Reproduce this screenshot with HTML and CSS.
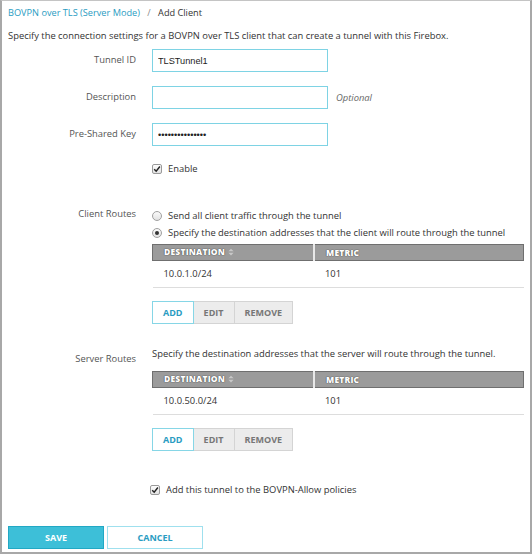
FILE: index.html
```html
<!DOCTYPE html>
<html>
<head>
    <meta charset="UTF-8">
    <title>Add Client</title>
    <link rel="stylesheet" href="styles.css">
</head>
<body>
<div class="page">

<div class="crumbs">
    <a href="#">BOVPN over TLS (Server Mode)</a>
    <span class="sep">/</span>
    <span>Add Client</span>
</div>

<p class="intro">Specify the connection settings for a BOVPN over TLS client that can create a tunnel with this Firebox.</p>

<div class="form">
    <div class="row field">
        <label class="label">Tunnel ID</label>
        <div class="control"><input class="text" type="text" value="TLSTunnel1"></div>
    </div>
    <div class="row field">
        <label class="label">Description</label>
        <div class="control"><input class="text" type="text" value=""><span class="hint">Optional</span></div>
    </div>
    <div class="row field">
        <label class="label">Pre-Shared Key</label>
        <div class="control"><input class="text" type="password" value="secretkey123456"></div>
    </div>
    <div class="row enable">
        <span class="label"></span>
        <div class="control">
            <span class="check"><svg viewBox="0 0 10 10" width="8" height="8"><path d="M1.5 5.2 L4 7.8 L8.6 1.8" fill="none" stroke="#222" stroke-width="1.8"/></svg></span>
            <span>Enable</span>
        </div>
    </div>

    <div class="row routes">
        <span class="label">Client Routes</span>
        <div class="control stack">
            <div class="radio-line"><span class="radio"></span>Send all client traffic through the tunnel</div>
            <div class="radio-line"><span class="radio on"></span>Specify the destination addresses that the client will route through the tunnel</div>
            <table class="grid">
                <tr>
                    <th class="col1">DESTINATION <span class="sort"><svg viewBox="0 0 8 10" width="6" height="8"><path d="M4 0.5 L7.5 4 L0.5 4 Z M4 9.5 L7.5 6 L0.5 6 Z" fill="#c8c8c8"/></svg></span></th>
                    <th>METRIC</th>
                </tr>
                <tr>
                    <td>10.0.1.0/24</td>
                    <td>101</td>
                </tr>
            </table>
            <div class="btns">
                <button class="add">ADD</button><button>EDIT</button><button>REMOVE</button>
            </div>
        </div>
    </div>

    <div class="row routes server">
        <span class="label">Server Routes</span>
        <div class="control stack">
            <div class="note">Specify the destination addresses that the server will route through the tunnel.</div>
            <table class="grid">
                <tr>
                    <th class="col1">DESTINATION <span class="sort"><svg viewBox="0 0 8 10" width="6" height="8"><path d="M4 0.5 L7.5 4 L0.5 4 Z M4 9.5 L7.5 6 L0.5 6 Z" fill="#c8c8c8"/></svg></span></th>
                    <th>METRIC</th>
                </tr>
                <tr>
                    <td>10.0.50.0/24</td>
                    <td>101</td>
                </tr>
            </table>
            <div class="btns">
                <button class="add">ADD</button><button>EDIT</button><button>REMOVE</button>
            </div>
        </div>
    </div>

    <div class="row policy">
        <span class="label"></span>
        <div class="control">
            <span class="check"><svg viewBox="0 0 10 10" width="8" height="8"><path d="M1.5 5.2 L4 7.8 L8.6 1.8" fill="none" stroke="#222" stroke-width="1.8"/></svg></span>
            <span>Add this tunnel to the BOVPN-Allow policies</span>
        </div>
    </div>
</div>

<div class="actions">
    <button class="save">SAVE</button>
    <button class="cancel">CANCEL</button>
</div>

</div>
</body>
</html>
```

FILE: styles.css
```css
html, body {
    margin: 0;
    padding: 0;
    background: #fff;
}
.page {
    box-sizing: border-box;
    width: 532px;
    height: 554px;
    border: 2px solid #a8a8a8;
    border-top: 1px solid #c4c4c4;
    padding: 5px 6px 0 6px;
    font-family: "Open Sans", sans-serif;
    font-size: 9.4px;
    line-height: 14px;
    color: #333;
}
.crumbs {
    font-size: 9.2px;
    line-height: 14px;
    color: #333;
}
.crumbs a {
    color: #2a9cc2;
    text-decoration: none;
}
.crumbs .sep {
    color: #888;
    margin: 0 5px;
}
.intro {
    margin: 9px 0 6px 0;
}
.row {
    display: flex;
}
.label {
    width: 128px;
    flex: none;
    text-align: right;
    color: #555;
    margin-right: 16px;
}
.control {
    display: flex;
    align-items: center;
}
.field {
    margin-bottom: 14px;
}
.field .label {
    line-height: 21px;
}
.text {
    box-sizing: border-box;
    width: 176px;
    height: 23px;
    border: 1px solid #7ed3e4;
    padding: 0 5px;
    font-family: "Liberation Sans", Arial, sans-serif;
    font-size: 9.2px;
    color: #222;
    outline: none;
}
.hint {
    font-style: italic;
    color: #666;
    margin-left: 8px;
}
.check {
    display: inline-flex;
    align-items: center;
    justify-content: center;
    box-sizing: border-box;
    width: 10px;
    height: 10px;
    border: 1px solid #9a9a9a;
    border-radius: 2px;
    background: linear-gradient(#fdfdfd, #e3e3e3);
    margin-right: 6px;
}
.enable {
    margin-top: 16px;
}
.routes {
    margin-top: 31px;
}
.stack {
    flex-direction: column;
    align-items: flex-start;
}
.radio-line {
    display: flex;
    align-items: center;
    height: 17px;
}
.radio {
    box-sizing: border-box;
    width: 10px;
    height: 10px;
    border: 1px solid #a0a0a0;
    border-radius: 50%;
    background: linear-gradient(#fafafa, #e2e2e2);
    margin-right: 6px;
    display: inline-flex;
    align-items: center;
    justify-content: center;
}
.radio.on::after {
    content: "";
    width: 4px;
    height: 4px;
    border-radius: 50%;
    background: #333;
}
.grid {
    width: 372px;
    border-collapse: collapse;
    margin-top: 3px;
}
.grid th {
    background: #9b9b9b;
    color: #fff;
    font-weight: 800;
    font-size: 8.5px;
    text-align: left;
    height: 15px;
    padding: 0 0 0 11px;
    border: 1px solid #6f6f6f;
    text-shadow: 0 0 1px #444, 0 0 1px #444;
    letter-spacing: 0.2px;
}
.grid th.col1 {
    width: 149px;
    border-right: 2px solid #e8e8e8;
}
.sort {
    vertical-align: -1px;
}
.sort svg {
    display: inline-block;
}
.grid td {
    height: 26px;
    padding: 0 0 0 11px;
    border-bottom: 1px solid #ddd;
    color: #333;
}
.btns {
    display: flex;
    margin-top: 13px;
}
.btns button {
    box-sizing: border-box;
    height: 23px;
    padding: 0 10px;
    min-width: 41px;
    border: 1px solid #d4d4d4;
    background: #ececec;
    color: #777;
    font-family: "Open Sans", sans-serif;
    font-weight: 700;
    font-size: 9px;
    cursor: pointer;
}
.btns button + button {
    border-left: 0;
}
.btns button.add {
    border: 1px solid #86d6e6;
    background: #fff;
    color: #2a9cc2;
}
.server {
    margin-top: 23px;
}
.server .label {
    padding-top: 5px;
}
.note {
    line-height: 14px;
    margin-bottom: 7px;
}
.policy {
    margin-top: 32px;
}
.policy .control {
    margin-left: -2px;
}
.actions {
    display: flex;
    gap: 3px;
    margin-top: 29px;
}
.actions button {
    box-sizing: border-box;
    width: 96px;
    height: 23px;
    font-family: "Open Sans", sans-serif;
    font-weight: 700;
    font-size: 9px;
    cursor: pointer;
}
.save {
    background: #3dbfd8;
    border: 1px solid #22a8c4;
    color: #fff;
}
.cancel {
    background: #fff;
    border: 1px solid #9fe0ee;
    color: #2a9cc2;
}
```
